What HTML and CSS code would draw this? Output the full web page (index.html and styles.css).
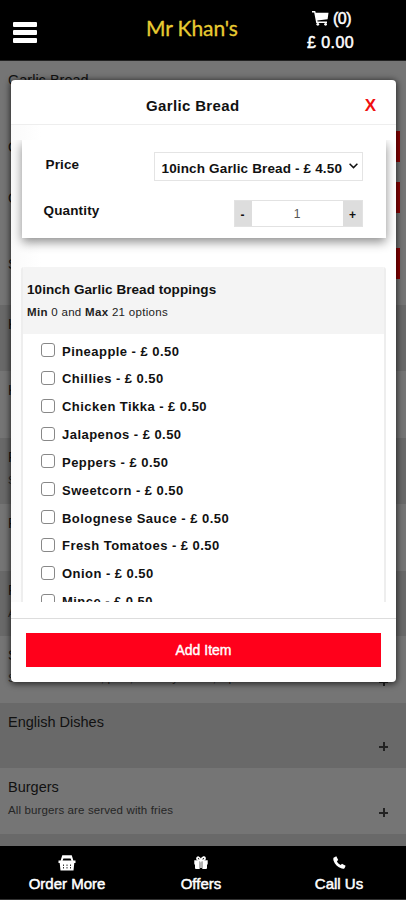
FILE: index.html
```
<!DOCTYPE html>
<html lang="en">
<head>
<meta charset="utf-8">
<title>Mr Khan's</title>
<link rel="stylesheet" href="styles.css">
</head>
<body>
<div class="app">
  <header class="topbar">
    <div class="burger"><i></i><i></i><i></i></div>
    <div class="brand">Mr Khan's</div>
    <div class="basket">
      <div class="basket-row">
        <svg width="17" height="15" viewBox="0 0 17 15"><path fill="#fff" d="M0 0h3.200l.5 1.800H16.500L15.600 8.200 5.300 9.400l.3 1.100H15v1.500H4.200L2.200 1.500H0z"/><circle cx="5.800" cy="13.300" r="1.400" fill="#fff"/><circle cx="13.600" cy="13.300" r="1.400" fill="#fff"/></svg>
        <span class="count">(0)</span>
      </div>
      <div class="total">£ 0.00</div>
    </div>
  </header>

  <main class="menu">
    <section class="cat first">
      <h2>Garlic Bread</h2>
      <div class="dish d1"><span>G</span><b></b></div>
      <div class="dish d2"><span>G</span><b></b></div>
      <div class="dish d3"><span>S</span><b></b></div>
    </section>
    <section class="cat alt c1"><h2>K</h2></section>
    <section class="cat c2"><h2>K</h2></section>
    <section class="cat alt c1"><h2>P</h2><p>S</p></section>
    <section class="cat c2"><h2>P</h2></section>
    <section class="cat alt c3"><h2>P</h2><p>A</p></section>
    <section class="cat c2"><h2>S</h2><p>Served with salad, pitta, and any sauce, dip</p><span class="plus"></span></section>
    <section class="cat alt c3"><h2>English Dishes</h2><span class="plus"></span></section>
    <section class="cat c1"><h2>Burgers</h2><p class="burgers">All burgers are served with fries</p><span class="plus"></span></section>
    <section class="cat alt last"></section>
  </main>

  <nav class="tabs">
    <a class="tab">
      <svg width="18" height="16" viewBox="0 0 18 16"><path fill="none" stroke="#fff" stroke-width="2" d="M3.500 6 5 1.300h8L14.500 6"/><path fill="#fff" d="M5 2h8v1.500H5zM.5 5.500h17v2.500h-1.200L15.500 15.500h-13L1.700 8H.5z"/><path stroke="#000" stroke-width=".8" stroke-dasharray="1.500 1" d="M5.500 9.500v4M9 9.500v4M12.500 9.500v4"/></svg>
      <span>Order More</span>
    </a>
    <a class="tab">
      <svg width="14" height="14" viewBox="0 0 14 14"><path fill="none" stroke="#fff" stroke-width="1.800" d="M6.800 4.500C5 4.500 2.800 4 3 2.300 3.200.6 5.500.5 6.800 4.300 8.500.5 10.800.6 11 2.300 11.200 4 9 4.500 7.200 4.500"/><path fill="#fff" d="M.3 4.300h5.400V13H2a1 1 0 0 1-1-1V8.500H.3zM13.700 4.300H8.300V13H12a1 1 0 0 0 1-1V8.500h.7z"/><path fill="#fff" d="M6.300 5h1.400v7H6.300z"/></svg>
      <span>Offers</span>
    </a>
    <a class="tab">
      <svg width="13" height="13" viewBox="0 0 13 13"><path fill="#fff" d="M.5 1.800 3.300.3 5.200 4 3.900 5.300c.8 1.700 2 2.900 3.800 3.800L9 7.700l3.600 2-.9 2.200c-.5.8-1.800 1-2.900.7C4.600 11.200 1.800 8.500.5 4.500c-.3-1-.3-2 0-2.700z"/></svg>
      <span>Call Us</span>
    </a>
  </nav>
</div>

<div class="modal">
  <div class="modal-head"><span class="title">Garlic Bread</span><span class="close">X</span></div>
  <div class="modal-body">
    <div class="clip">
      <div class="options">
        <div class="row price"><label>Price</label>
          <div class="select"><span>10inch Garlic Bread - £ 4.50</span><svg width="9" height="6" viewBox="0 0 9 6"><path fill="none" stroke="#111" stroke-width="1.500" d="M.6.8 4.500 4.600 8.400.8"/></svg></div>
        </div>
        <div class="row qty"><label>Quantity</label>
          <div class="stepper"><span class="minus">-</span><span class="num">1</span><span class="add">+</span></div>
        </div>
      </div>
    </div>
    <div class="toppings">
      <div class="toppings-head"><h3>10inch Garlic Bread toppings</h3><p><b>Min</b> 0 and <b>Max</b> 21 options</p></div>
      <ul>
        <li><i></i><span>Pineapple - £ 0.50</span></li>
        <li><i></i><span>Chillies - £ 0.50</span></li>
        <li><i></i><span>Chicken Tikka - £ 0.50</span></li>
        <li><i></i><span>Jalapenos - £ 0.50</span></li>
        <li><i></i><span>Peppers - £ 0.50</span></li>
        <li><i></i><span>Sweetcorn - £ 0.50</span></li>
        <li><i></i><span>Bolognese Sauce - £ 0.50</span></li>
        <li><i></i><span>Fresh Tomatoes - £ 0.50</span></li>
        <li><i></i><span>Onion - £ 0.50</span></li>
        <li><i></i><span>Mince - £ 0.50</span></li>
      </ul>
    </div>
  </div>
  <div class="modal-foot"><div class="submit"><span>Add Item</span></div></div>
</div>
</body>
</html>
```
FILE: styles.css
```
* { box-sizing: border-box; }
body { margin: 0; font-family: "Liberation Sans", Arial, sans-serif; color: #111; }
h2, h3, p, ul { margin: 0; padding: 0; }
span, h2, h3, p { white-space: nowrap; }
svg { display: block; overflow: visible; }
.app { width: 406px; height: 900px; overflow: hidden; display: flex; flex-direction: column; background: #555; }

.topbar { height: 61px; flex: none; background: #000; display: grid; grid-template-columns: 146px 1fr 150px; border-bottom: 1px solid #222; }
.burger { padding: 22px 0 0 13px; display: flex; flex-direction: column; gap: 3.500px; }
.burger i { width: 24px; height: 4.700px; background: #fff; border-radius: 1px; }
.brand { padding-top: 15px; font: 400 21px/26px Lato, sans-serif; color: #e8cb32; white-space: nowrap; letter-spacing: -.1px; -webkit-text-stroke: .3px #e8cb32; }
.basket { color: #fff; padding-top: 10px; width: 149px; font-size: 16px; -webkit-text-stroke: .5px #fff; }
.basket-row { display: flex; gap: 4px; padding-left: 56px; line-height: 18px; }
.basket-row .count { letter-spacing: -.5px; }
.basket-row svg { margin-top: 1px; }
.total { padding-left: 51px; line-height: 29px; letter-spacing: .45px; }

.menu { flex: 1; min-height: 0; overflow: hidden; background: #757575; }
.cat { position: relative; padding: 11px 8px 0; background: #757575; }
.cat.alt { background: #696969; }
.cat h2 { font-size: 14.500px; font-weight: 400; line-height: 17px; color: #111; }
.cat p { margin-top: 6px; font-size: 11.500px; letter-spacing: .12px; line-height: 17px; color: #262626; }
.first { height: 244px; }
.c1 { height: 66px; }
.c2 { height: 67px; }
.c3 { height: 65px; }
.last { height: 14px; }
.dish { display: flex; justify-content: space-between; align-items: center; height: 31px; margin-right: -2px; font-size: 14px; }
.dish b { width: 30px; height: 31px; background: #8e0000; }
.d1 { margin-top: 42px; }
.d2 { margin-top: 20px; }
.d3 { margin-top: 35px; }
.plus { position: absolute; right: 18px; bottom: 17px; width: 9px; height: 9px; background: linear-gradient(#222, #222) center / 9px 2px no-repeat, linear-gradient(#222, #222) center / 2px 9px no-repeat; }

.tabs { height: 54px; flex: none; background: #000; border-bottom: 1.500px solid #333; display: grid; grid-template-columns: 134px 134px 142px; color: #fff; }
.tab { display: grid; grid-template-rows: 28px 16px; align-content: start; justify-items: center; align-items: center; font-size: 15px; line-height: 16px; -webkit-text-stroke: .5px #fff; padding-top: 2px; }
.tab svg { margin-top: 1px; }

.modal { position: absolute; left: 11px; top: 80px; width: 385px; height: 602px; background: #fff; border-radius: 4px; box-shadow: 0 1px 6px 1px rgba(0,0,0,.65); display: flex; flex-direction: column; }
.modal-head { height: 45px; flex: none; border-bottom: 1px solid #eee; display: flex; align-items: center; justify-content: space-between; padding: 6px 20px 0 135px; font-weight: bold; font-size: 15px; }
.title { letter-spacing: .35px; }
.close { color: #f01010; font-size: 17px; margin-top: 1px; }
.modal-body { height: 477px; flex: none; overflow: hidden; background: linear-gradient(90deg, #fafafa, #fff 30px, #fff); }
.clip { height: 127px; padding: 0 10.500px; overflow: hidden; margin-top: 15px; }
.options { height: 98px; background: #fff; box-shadow: 0 4px 10px rgba(0,0,0,.45); }
.row { display: flex; justify-content: space-between; padding-right: 23px; padding-left: 24px; }
.row label { font-weight: bold; font-size: 13.500px; line-height: 18px; letter-spacing: .15px; }
.price { padding-top: 12px; }
.price label { margin-top: 4px; }
.select { width: 209px; height: 29px; border: 1px solid #e4e4e4; display: flex; align-items: center; justify-content: space-between; padding: 4px 4px 0 7px; font-weight: bold; font-size: 13.500px; letter-spacing: .15px; }
.select svg { margin-top: -5px; }
.qty { padding-top: 19px; padding-left: 22px; }
.qty label { margin-top: 2px; }
.stepper { width: 129px; height: 27px; border: 1px solid #e2e2e2; display: grid; grid-template-columns: 16px 1fr 18px; grid-template-rows: 25px; text-align: center; line-height: 27px; font-size: 12px; }
.minus, .add { background: #ddd; font-weight: bold; line-height: 29px; }
.num { color: #555; border: solid #ddd; border-width: 0 1px; }

.toppings { margin: 0 10px; height: 335px; overflow: hidden; border: solid #eee; border-width: 0 2px; border-radius: 3px 3px 0 0; background: #fff; }
.toppings-head { height: 67px; background: #f4f4f4; padding: 14px 0 0 4px; }
.toppings h3 { font-size: 13.500px; line-height: 17px; letter-spacing: .06px; }
.toppings p { font-size: 11.500px; line-height: 15px; margin-top: 7px; color: #222; letter-spacing: .31px; }
.toppings ul { list-style: none; padding: 3.600px 0 0 18px; }
.toppings li { height: 27.850px; display: flex; align-items: center; gap: 7px; font-weight: bold; font-size: 13px; line-height: 16px; letter-spacing: .46px; }
.toppings li i { width: 14px; height: 14px; border: 1.500px solid #888; border-radius: 3px; margin-top: -3px; flex: none; }

.modal-foot { margin-top: 16px; border-top: 1px solid #ddd; padding: 14px 15px 0; }
.submit { height: 34px; background: #ff001b; color: #fff; display: flex; align-items: center; justify-content: center; font-size: 14px; -webkit-text-stroke: .4px #fff; }
```
